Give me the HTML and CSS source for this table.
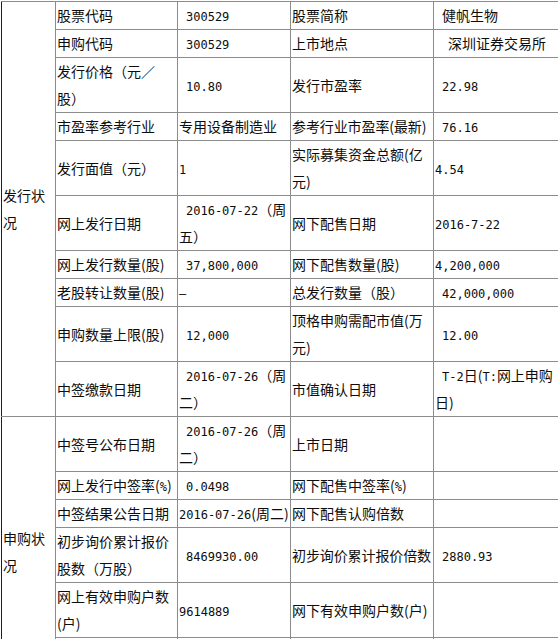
FILE: index.html
```html
<!DOCTYPE html>
<html lang="zh-CN">
<head>
<meta charset="utf-8">
<title>发行状况</title>
<link rel="stylesheet" href="styles.css">
</head>
<body>
<table class="ipo">
  <colgroup>
    <col class="c1"><col class="c2"><col class="c3"><col class="c4"><col class="c5">
  </colgroup>
  <tbody>
    <tr>
      <td class="sec" rowspan="10">发行状况</td>
      <td>股票代码</td>
      <td class="t1"><span class="n">300529</span></td>
      <td>股票简称</td>
      <td class="t1">健帆生物</td>
    </tr>
    <tr>
      <td>申购代码</td>
      <td class="t1"><span class="n">300529</span></td>
      <td>上市地点</td>
      <td class="t2">深圳证券交易所</td>
    </tr>
    <tr class="r2">
      <td>发行价格（元／<wbr>股）</td>
      <td class="t1"><span class="n">10.80</span></td>
      <td>发行市盈率</td>
      <td class="t1"><span class="n">22.98</span></td>
    </tr>
    <tr>
      <td>市盈率参考行业</td>
      <td>专用设备制造业</td>
      <td class="tight">参考行业市盈率(最新)</td>
      <td class="t1"><span class="n">76.16</span></td>
    </tr>
    <tr class="r2">
      <td>发行面值（元）</td>
      <td><span class="n">1</span></td>
      <td>实际募集资金总额(亿元)</td>
      <td><span class="n">4.54</span></td>
    </tr>
    <tr class="r2">
      <td>网上发行日期</td>
      <td class="t1"><span class="n">2016-07-22</span>（周五）</td>
      <td>网下配售日期</td>
      <td><span class="n">2016-7-22</span></td>
    </tr>
    <tr>
      <td>网上发行数量(股)</td>
      <td class="t1"><span class="n">37,800,000</span></td>
      <td>网下配售数量(股)</td>
      <td><span class="n">4,200,000</span></td>
    </tr>
    <tr>
      <td>老股转让数量(股)</td>
      <td><span class="n">–</span></td>
      <td>总发行数量（股）</td>
      <td class="t1"><span class="n">42,000,000</span></td>
    </tr>
    <tr class="r2">
      <td>申购数量上限(股)</td>
      <td class="t1"><span class="n">12,000</span></td>
      <td>顶格申购需配市值(万元)</td>
      <td class="t1"><span class="n">12.00</span></td>
    </tr>
    <tr class="r2">
      <td>中签缴款日期</td>
      <td class="t1"><span class="n">2016-07-26</span>（周二）</td>
      <td>市值确认日期</td>
      <td class="t1"><span class="n">T-2</span>日(<span class="n">T:</span>网上申购日)</td>
    </tr>
    <tr class="r2">
      <td class="sec" rowspan="6">申购状况</td>
      <td>中签号公布日期</td>
      <td class="t1"><span class="n">2016-07-26</span>（周二）</td>
      <td>上市日期</td>
      <td></td>
    </tr>
    <tr>
      <td>网上发行中签率(<span class="n">%</span>)</td>
      <td class="t1"><span class="n">0.0498</span></td>
      <td>网下配售中签率(<span class="n">%</span>)</td>
      <td></td>
    </tr>
    <tr>
      <td>中签结果公告日期</td>
      <td class="nw"><span class="n">2016-07-26</span>(周二)</td>
      <td>网下配售认购倍数</td>
      <td></td>
    </tr>
    <tr class="r2">
      <td>初步询价累计报价股数（万股）</td>
      <td class="t1"><span class="n">8469930.00</span></td>
      <td class="tight">初步询价累计报价倍数</td>
      <td class="t1"><span class="n">2880.93</span></td>
    </tr>
    <tr class="r2">
      <td>网上有效申购户数(户)</td>
      <td><span class="n">9614889</span></td>
      <td>网下有效申购户数(户)</td>
      <td></td>
    </tr>
    <tr class="r4">
      <td></td>
      <td></td>
      <td></td>
      <td></td>
    </tr>
  </tbody>
</table>
</body>
</html>
```

FILE: styles.css
```css
html, body {
  margin: 0;
  padding: 0;
  background: #ffffff;
}

body {
  padding: 1px 0 0 1px;
  overflow: hidden;
}

.ipo {
  border-collapse: collapse;
  table-layout: fixed;
  width: 562px;
  font-family: "Noto Sans CJK SC", "Noto Sans", sans-serif;
  font-size: 14px;
  line-height: 27px;
  color: #0d0d0d;
}

.c1 { width: 54px; }
.c2 { width: 122px; }
.c3 { width: 113px; }
.c4 { width: 143px; }
.c5 { width: 130px; }

.ipo td {
  border: 1px solid #8c8c8c;
  padding: 0 0 0 1px;
  vertical-align: middle;
  height: 27px;
  overflow: hidden;
}

.ipo td.sec {
  border-left: 1px solid #1e1e1e;
}

.ipo td.tight {
  letter-spacing: -0.1px;
}

.ipo td.t1 { text-indent: 7px; }
.ipo td.t2 { text-indent: 13px; }
.ipo td.nw { white-space: nowrap; overflow: visible; }

.ipo tr.r2 td { height: 54px; }
.ipo tr.r4 td { height: 48px; }

.n {
  font-family: "DejaVu Sans Mono", "Liberation Mono", monospace;
  font-size: 12px;
  line-height: 1;
}
```
